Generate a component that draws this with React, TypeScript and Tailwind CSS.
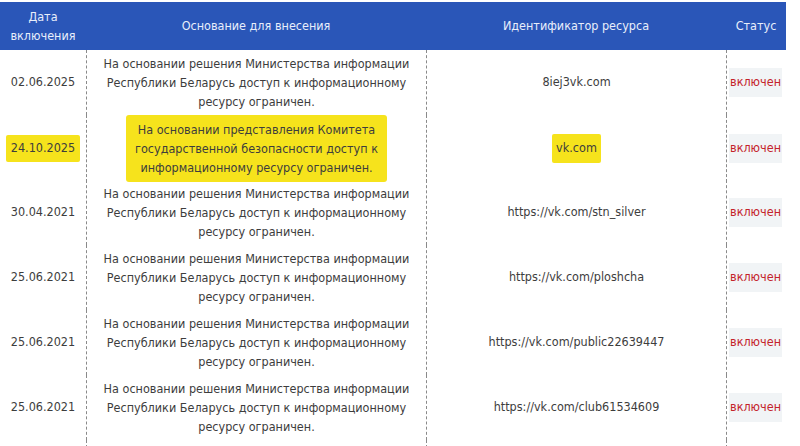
const rows = [
  { date: "02.06.2025", basis: "mininfo", id: "8iej3vk.com" },
  { date: "24.10.2025", basis: "kgb", id: "vk.com", marked: true },
  { date: "30.04.2021", basis: "mininfo", id: "https://vk.com/stn_silver" },
  { date: "25.06.2021", basis: "mininfo", id: "https://vk.com/ploshcha" },
  { date: "25.06.2021", basis: "mininfo", id: "https://vk.com/public22639447" },
  { date: "25.06.2021", basis: "mininfo", id: "https://vk.com/club61534609" },
];

const basisText: Record<string, string[]> = {
  mininfo: [
    "На основании решения Министерства информации",
    "Республики Беларусь доступ к информационному",
    "ресурсу ограничен.",
  ],
  kgb: [
    "На основании представления Комитета",
    "государственной безопасности доступ к",
    "информационному ресурсу ограничен.",
  ],
};

const cols = "grid grid-cols-[86px_340px_300px_60px]";

export default function App() {
  return (
    <div className="w-[800px] h-[446px] bg-white overflow-hidden pt-[2px] font-['DejaVu_Sans_Condensed','DejaVu_Sans',sans-serif] text-[12.5px] text-[#3d3d3d]">
      <div className="w-[786px]">
        {/* Header */}
        <div className={`${cols} h-[48px] bg-[#2a56b8] text-[#e8eefb] text-[12.5px]`}>
          <div className="flex flex-col items-center justify-center leading-[19px]">
            <span>Дата</span>
            <span>включения</span>
          </div>
          <div className="flex items-center justify-center">Основание для внесения</div>
          <div className="flex items-center justify-center">Идентификатор ресурса</div>
          <div className="flex items-center justify-center">Статус</div>
        </div>

        {/* Body */}
        {rows.map((r, i) => (
          <div key={i} className={`${cols} h-[65px]`}>
            <div className="flex items-center justify-center">
              <span className={r.marked ? "bg-[#f6e31c] px-[5px] py-[4px] rounded-[2px]" : ""}>{r.date}</span>
            </div>
            <div className="flex items-center justify-center border-l border-dashed border-[#8a8a8a] leading-[19px] text-center">
              <div className={r.marked ? "bg-[#f6e31c] px-[9px] py-[5px] rounded-[3px]" : ""}>
                {basisText[r.basis].map((l) => (
                  <div key={l}>{l}</div>
                ))}
              </div>
            </div>
            <div className="flex items-center justify-center border-l border-dashed border-[#8a8a8a]">
              <span className={r.marked ? "bg-[#f6e31c] px-[4px] py-[5px] rounded-[2px]" : ""}>{r.id}</span>
            </div>
            <div className="flex items-center border-l border-dashed border-[#8a8a8a] pl-[2px]">
              <span className="bg-[#f1f4f6] px-[1px] py-[5px] text-[#c4232b]">включен</span>
            </div>
          </div>
        ))}
        <div className={`${cols} h-[8px]`}>
          <div />
          <div className="border-l border-dashed border-[#8a8a8a]" />
          <div className="border-l border-dashed border-[#8a8a8a]" />
          <div className="border-l border-dashed border-[#8a8a8a]" />
        </div>
      </div>
    </div>
  );
}
